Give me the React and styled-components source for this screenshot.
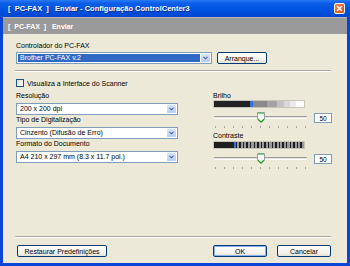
import React from 'react';
import styled, { createGlobalStyle } from 'styled-components';

const Global = createGlobalStyle`
  html, body { margin: 0; padding: 0; width: 350px; height: 266px; overflow: hidden; background: #ece9d8; }
  #root { width: 350px; height: 266px; }
  * { box-sizing: border-box; }
  body { font-family: "Liberation Sans", Arial, sans-serif; font-size: 7px; color: #000; }
`;

const Window = styled.div`
  width: 350px;
  height: 266px;
  display: flex;
  flex-direction: column;
  background: #0a45d6;
`;

const TitleBar = styled.div`
  height: 17px;
  flex: none;
  display: flex;
  align-items: center;
  justify-content: space-between;
  padding: 0 5px 0 8px;
  background: linear-gradient(#2a7af2 0%, #0a5ee8 20%, #0052e0 60%, #0046cf 100%);
`;

const TitleText = styled.span`
  color: #fff;
  font-weight: bold;
  font-size: 7.5px;
  white-space: pre;
  text-shadow: 1px 1px 0 #0a2a8a;
`;

const CloseBtn = styled.div`
  width: 11px;
  height: 11px;
  border: 1px solid #fff;
  border-radius: 2px;
  background: linear-gradient(135deg, #f0864e, #d9461a);
  display: flex;
  align-items: center;
  justify-content: center;
`;

const Frame = styled.div`
  flex: 1;
  display: flex;
  flex-direction: column;
  margin: 0 3px 3px 3px;
  background: #ece9d8;
`;

const Header = styled.div`
  height: 17px;
  flex: none;
  display: flex;
  align-items: center;
  padding-left: 5px;
  background: #9a9a9a;
  border-top: 1px solid #b5b5b5;
  color: #fff;
  font-weight: bold;
  white-space: pre;
  font-size: 7px;
`;

const Body = styled.div`
  flex: 1;
  display: flex;
  flex-direction: column;
  padding: 7px 16px 6px 13px;
`;

const Label = styled.div`
  height: 9px;
  line-height: 9px;
  white-space: nowrap;
`;

const TopRow = styled.div`
  display: flex;
  align-items: center;
  gap: 5px;
  margin-top: 2px;
`;

const SelectBox = styled.div`
  display: flex;
  width: ${p => p.$w}px;
  height: 12px;
  background: #fff;
  border: 1px solid #7f9db9;
  padding: 1px;
`;

const SelectText = styled.div`
  flex: 1;
  line-height: 8px;
  padding-left: 2px;
  white-space: nowrap;
  overflow: hidden;
  color: ${p => (p.$hl ? '#fff' : '#000')};
  background: ${p => (p.$hl ? '#316ac5' : 'transparent')};
`;

const ArrowBtn = styled.div`
  width: 9px;
  flex: none;
  margin-left: 1px;
  border-radius: 1px;
  background: linear-gradient(#d8e3fb, #b7cbf6);
  display: flex;
  align-items: center;
  justify-content: center;
`;

const Button = styled.div`
  width: ${p => p.$w}px;
  height: 12px;
  display: flex;
  align-items: center;
  justify-content: center;
  border: 1px solid #003c74;
  border-radius: 2px;
  background: linear-gradient(#ffffff, #f3f2ec 70%, #e3e0d3);
  box-shadow: ${p => (p.$default ? 'inset 0 0 0 1px #8fb1ee' : 'none')};
  white-space: nowrap;
`;

const Separator = styled.div`
  height: 2px;
  border-top: 1px solid #aca899;
  border-bottom: 1px solid #fff;
  margin-left: -1px;
`;

const CheckRow = styled.div`
  display: flex;
  align-items: center;
  gap: 3px;
  margin-top: 6px;
  height: 10px;
`;

const CheckBox = styled.div`
  width: 8px;
  height: 8px;
  background: linear-gradient(135deg, #dcdcd7, #fff);
  border: 1px solid #1c5180;
`;

const Columns = styled.div`
  display: grid;
  grid-template-columns: 162px 1fr;
  column-gap: 35px;
  margin-top: 3px;
`;

const Field = styled.div`
  display: flex;
  flex-direction: column;
  gap: 3px;
`;

const Col = styled.div`
  display: flex;
  flex-direction: column;
`;

const Bar = styled.div`
  width: 92px;
  height: 8px;
  margin-top: ${p => p.$mt || 0}px;
  border: 1px solid #c8c6b8;
`;

const BrightBar = styled(Bar)`
  background: linear-gradient(90deg,
    #222 0, #222 36px, #3b6fe0 36px, #3b6fe0 39px,
    #8a8a8a 39px, #8a8a8a 53px, #a4a4a4 53px, #a4a4a4 63px,
    #c2c2c2 63px, #c2c2c2 70px, #d9d9d9 70px, #d9d9d9 76px,
    #ececec 76px, #ececec 82px, #fff 82px);
`;

const ContrastBar = styled(Bar)`
  height: 8px;
  background:
    linear-gradient(90deg, #1e1e1e 0, #1e1e1e 20px, #3b6fe0 20px, #3b6fe0 22px, transparent 22px),
    repeating-linear-gradient(90deg, #1e1e1e 0, #1e1e1e 1.5px, #9a9a9a 1.5px, #9a9a9a 3.6px);
`;

const SliderRow = styled.div`
  display: flex;
  align-items: flex-start;
  gap: 7px;
  height: 22px;
  padding-top: 4px;
`;

const SliderArea = styled.div`
  position: relative;
  width: 93px;
  height: 18px;
  margin-left: 1px;
`;

const Track = styled.div`
  position: absolute;
  left: 0;
  right: 0;
  top: 4px;
  height: 3px;
  border-top: 1px solid #9d9c99;
  border-bottom: 1px solid #fff;
  background: #e6e4da;
  border-radius: 1px;
`;

const Thumb = styled.svg`
  position: absolute;
  left: ${p => p.$x}px;
  top: 0;
`;

const Ticks = styled.div`
  position: absolute;
  left: 0;
  right: 0;
  top: 14px;
  height: 2px;
  display: flex;
  justify-content: space-between;
  padding: 0 1px;
`;

const Tick = styled.span`
  width: 1px;
  height: 2px;
  background: #a7a6a0;
`;

const ValueBox = styled.div`
  width: 18px;
  height: 10px;
  margin-top: 1px;
  background: #fff;
  border: 1px solid #7f9db9;
  display: flex;
  align-items: center;
  justify-content: center;
  font-size: 6.5px;
`;

const Spacer = styled.div`
  flex: 1;
`;

const Footer = styled.div`
  display: flex;
  justify-content: space-between;
  align-items: center;
  margin-top: 7px;
  padding-left: 1px;
`;

const BtnGroup = styled.div`
  display: flex;
  gap: 10px;
`;

const Chevron = () => (
  <svg width="5" height="4" viewBox="0 0 5 4">
    <path d="M0.5 0.8 L2.5 2.8 L4.5 0.8" stroke="#4d6185" strokeWidth="1.1" fill="none" />
  </svg>
);

const Select = ({ w, text, hl }) => (
  <SelectBox $w={w}>
    <SelectText $hl={hl}>{text}</SelectText>
    <ArrowBtn><Chevron /></ArrowBtn>
  </SelectBox>
);

const Slider = ({ value }) => (
  <SliderRow>
    <SliderArea>
      <Track />
      <Ticks>
        {Array.from({ length: 11 }).map((_, i) => <Tick key={i} />)}
      </Ticks>
      <Thumb $x={43} width="8" height="11" viewBox="0 0 8 11">
        <path d="M0.5 0.5 H7.5 V7 L4 10.5 L0.5 7 Z" fill="#f7f7f4" stroke="#8f9ea8" strokeWidth="1" />
        <path d="M1 7.2 L4 10 L7 7.2" fill="none" stroke="#21a121" strokeWidth="1.2" />
        <path d="M1.2 1.2 H6.8" stroke="#3dbb3d" strokeWidth="1" />
      </Thumb>
    </SliderArea>
    <ValueBox>{value}</ValueBox>
  </SliderRow>
);

export default function App() {
  return (
    <>
      <Global />
      <Window>
        <TitleBar>
          <TitleText>{'[  PC-FAX  ]   Enviar - Configuração ControlCenter3'}</TitleText>
          <CloseBtn>
            <svg width="7" height="7" viewBox="0 0 7 7">
              <path d="M1 1 L6 6 M6 1 L1 6" stroke="#fff" strokeWidth="1.4" />
            </svg>
          </CloseBtn>
        </TitleBar>
        <Frame>
          <Header>{'[  PC-FAX  ]   Enviar'}</Header>
          <Body>
            <Label>Controlador do PC-FAX</Label>
            <TopRow>
              <Select w={196} text="Brother PC-FAX v.2" hl />
              <Button $w={50}>Arranque...</Button>
            </TopRow>
            <Separator style={{ marginTop: 6 }} />
            <CheckRow>
              <CheckBox />
              <span>Visualiza a Interface do Scanner</span>
            </CheckRow>
            <Columns>
              <Col>
                <Field>
                  <Label>Resolução</Label>
                  <Select w={162} text="200 x 200 dpi" />
                </Field>
                <Field>
                  <Label>Tipo de Digitalização</Label>
                  <Select w={162} text="Cinzento (Difusão de Erro)" />
                </Field>
                <Field>
                  <Label>Formato do Documento</Label>
                  <Select w={162} text="A4 210 x 297 mm (8.3 x 11.7 pol.)" />
                </Field>
              </Col>
              <Col>
                <Label>Brilho</Label>
                <BrightBar />
                <Slider value="50" />
                <Label style={{ marginTop: 1 }}>Contraste</Label>
                <ContrastBar $mt={1} />
                <Slider value="50" />
              </Col>
            </Columns>
            <Spacer />
            <Separator />
            <Footer>
              <Button $w={90}>Restaurar Predefinições</Button>
              <BtnGroup>
                <Button $w={54} $default>OK</Button>
                <Button $w={54}>Cancelar</Button>
              </BtnGroup>
            </Footer>
          </Body>
        </Frame>
      </Window>
    </>
  );
}
